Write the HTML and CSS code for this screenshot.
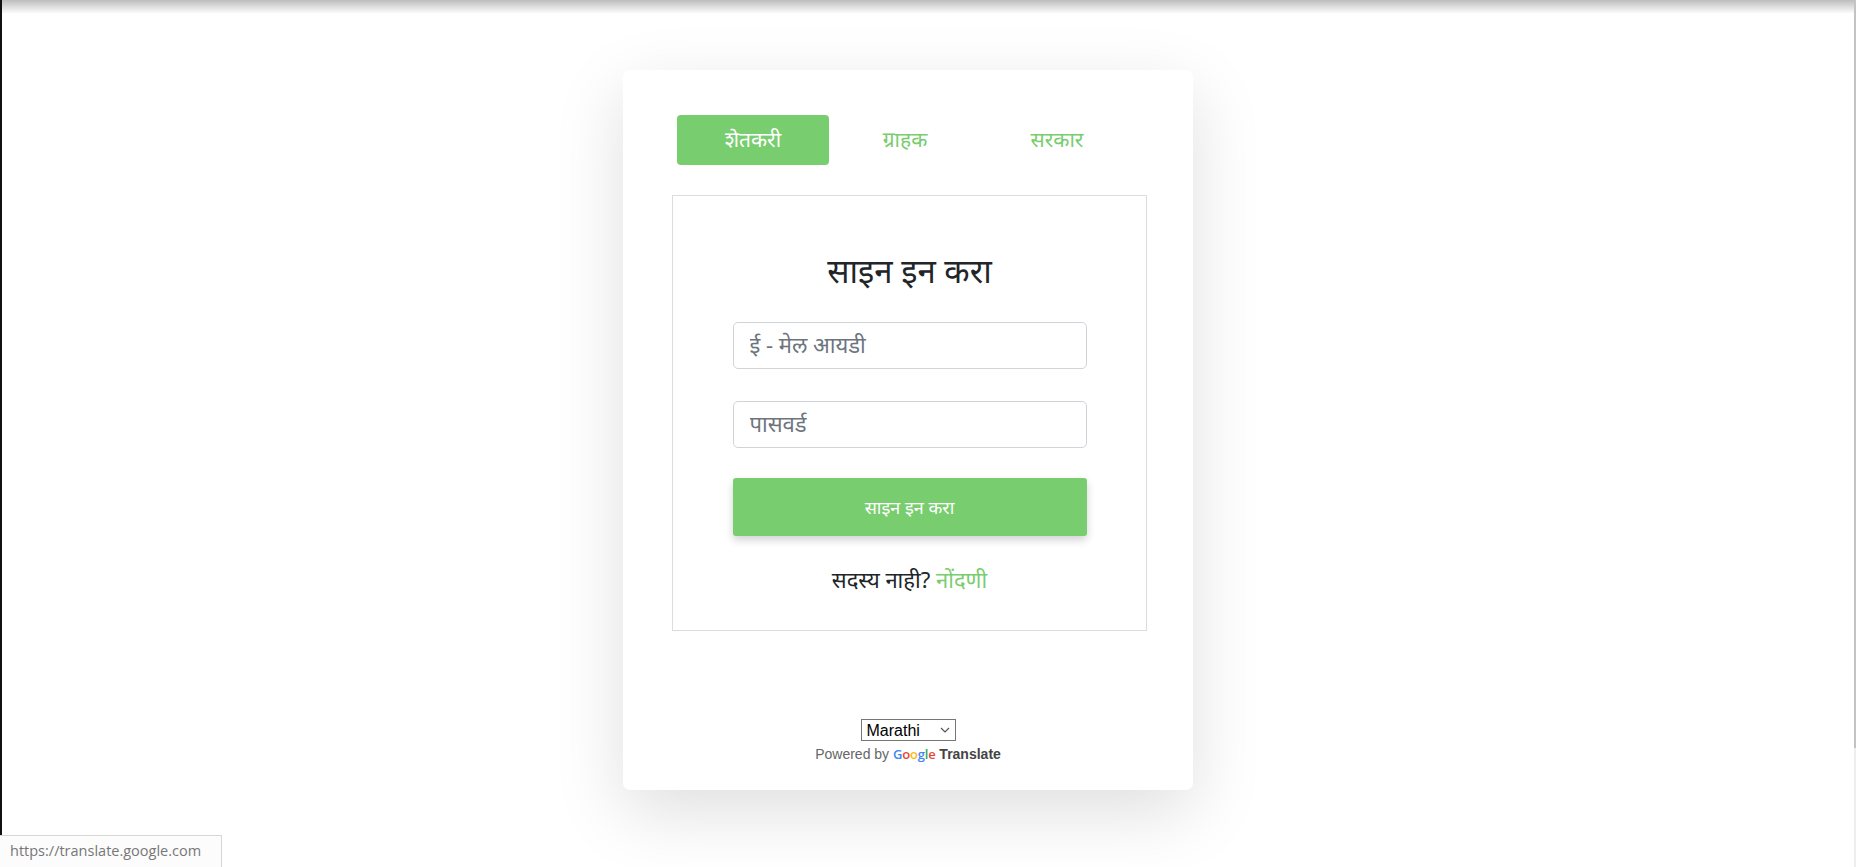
FILE: index.html
```html
<!DOCTYPE html>
<html lang="mr">
<head>
<meta charset="utf-8">
<title>साइन इन करा</title>
<link rel="stylesheet" href="styles.css">
</head>
<body>
<div class="chrome-shadow"></div>
<div class="left-edge"></div>
<div class="scroll-track"><div class="scroll-thumb"></div></div>
<main class="page">
  <section class="card">
    <nav class="tabs">
      <a class="tab active">शेतकरी</a>
      <a class="tab">ग्राहक</a>
      <a class="tab">सरकार</a>
    </nav>
    <div class="panel">
      <h2 class="title">साइन इन करा</h2>
      <input class="field" type="email" placeholder="ई - मेल आयडी">
      <input class="field" type="password" placeholder="पासवर्ड">
      <button class="submit">साइन इन करा</button>
      <p class="signup">सदस्य नाही? <a class="link">नोंदणी</a></p>
    </div>
    <div class="translate">
      <span class="lang-wrap">
        <select class="lang"><option>Marathi</option></select>
        <svg class="chev" width="10" height="6" viewBox="0 0 10 6"><path d="M1 1 L5 5 L9 1" fill="none" stroke="#555" stroke-width="1.2"/></svg>
      </span>
      <div class="powered">Powered by <span class="glogo"><span class="gb">G</span><span class="gr">o</span><span class="gy">o</span><span class="gb">g</span><span class="gg">l</span><span class="gr">e</span></span> <b class="tr">Translate</b></div>
    </div>
  </section>
</main>
<div class="status">https://translate.google.com</div>
</body>
</html>
```
FILE: styles.css
```css
html, body {
  margin: 0;
  padding: 0;
  background: #fff;
  height: 100%;
  overflow: hidden;
}
body {
  font-family: "Noto Sans", "Noto Sans Devanagari", "Lohit Devanagari", sans-serif;
}
.chrome-shadow {
  position: fixed;
  left: 0; top: 0; right: 0;
  height: 14px;
  background: linear-gradient(#bdbdbd, rgba(255,255,255,0));
  z-index: 5;
}
.left-edge {
  position: fixed;
  left: 0; top: 0; bottom: 0;
  width: 2px;
  background: #111;
  z-index: 6;
}
.scroll-track {
  position: fixed;
  right: 0; top: 0; bottom: 0;
  width: 2px;
  background: #eee;
  z-index: 6;
}
.scroll-thumb {
  height: 748px;
  background: #c3c3c3;
}
.page {
  display: flex;
  padding-top: 70px;
  padding-left: 623px;
}
.card {
  width: 570px;
  height: 720px;
  box-sizing: border-box;
  background: #fff;
  border-radius: 7px;
  box-shadow: 0 22px 70px rgba(0,0,0,0.13);
  padding: 45px 46px 0 49px;
  display: flex;
  flex-direction: column;
}
.tabs {
  display: flex;
  padding-left: 5px;
  height: 50px;
}
.tab {
  width: 152px;
  height: 50px;
  display: flex;
  align-items: center;
  justify-content: center;
  color: #78cd6e;
  font-size: 21px;
  border-radius: 4px;
  padding-bottom: 2px;
  box-sizing: border-box;
}
.tab.active {
  background: #78cd6e;
  color: #fff;
}
.panel {
  margin-top: 30px;
  height: 436px;
  box-sizing: border-box;
  border: 1px solid #dcdcdc;
  display: flex;
  flex-direction: column;
  align-items: center;
  padding-top: 44px;
}
.title {
  margin: 0;
  font-weight: 400;
  font-size: 33px;
  line-height: 62px;
  color: #212529;
}
.field {
  margin-top: 20px;
  width: 354px;
  height: 47px;
  box-sizing: border-box;
  border: 1px solid #ced4da;
  border-radius: 5px;
  padding: 0 16px 3px;
  font-family: inherit;
  font-size: 22px;
  color: #495057;
  outline: none;
}
.field + .field {
  margin-top: 32px;
}
.field::placeholder {
  color: #6c757d;
}
.submit {
  margin-top: 30px;
  width: 354px;
  height: 58px;
  border: none;
  border-radius: 3px;
  background: #78cd6e;
  color: #fff;
  font-family: inherit;
  font-size: 18px;
  box-shadow: 0 4px 8px rgba(0,0,0,0.18);
}
.signup {
  margin: 28px 0 0;
  font-size: 22px;
  color: #212529;
}
.link {
  color: #78cd6e;
}
.translate {
  margin-top: 88px;
  display: flex;
  flex-direction: column;
  align-items: center;
  padding-right: 3px;
}
.lang-wrap {
  position: relative;
  display: inline-flex;
}
.lang {
  width: 95px;
  height: 22px;
  font-family: "Liberation Sans", Arial, sans-serif;
  font-size: 16px;
  border: 1px solid #767676;
  background: #fff;
  color: #000;
  border-radius: 0;
  padding: 0 0 0 5px;
  appearance: none;
  -webkit-appearance: none;
  outline: none;
}
.chev {
  position: absolute;
  right: 6px;
  top: 8px;
}
.powered {
  margin-top: 5px;
  font-family: "Liberation Sans", Arial, sans-serif;
  font-size: 14px;
  color: #666;
  line-height: 17px;
}
.glogo {
  font-family: "Open Sans", "Liberation Sans", sans-serif;
  font-weight: 600;
  font-size: 13px;
  letter-spacing: -0.2px;
}
.gb { color: #4285f4; }
.gr { color: #ea4335; }
.gy { color: #fbbc05; }
.gg { color: #34a853; }
.tr {
  color: #444;
  font-size: 14px;
}
.status {
  position: fixed;
  left: 0;
  bottom: 0;
  width: 222px;
  height: 32px;
  box-sizing: border-box;
  padding-left: 10px;
  line-height: 30px;
  font-family: "Open Sans", "DejaVu Sans", sans-serif;
  font-size: 14.5px;
  color: #777;
  background: #fcfcfc;
  border-top: 1px solid #d6d6d6;
  border-right: 1px solid #d6d6d6;
  z-index: 7;
}
```
